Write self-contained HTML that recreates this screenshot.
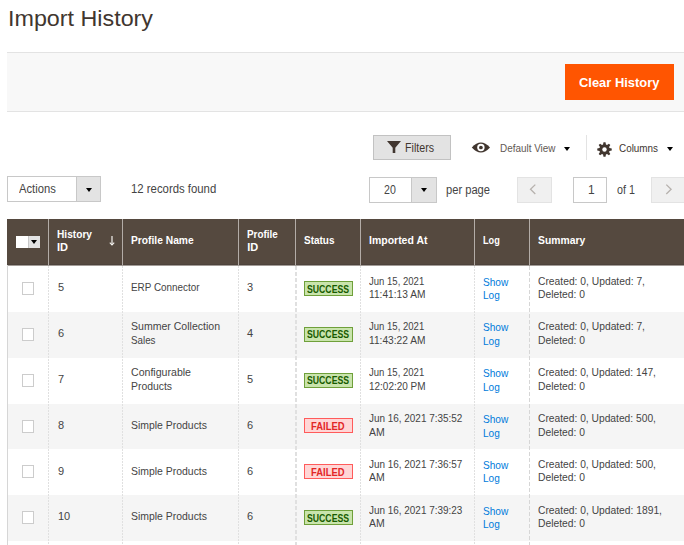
<!DOCTYPE html>
<html><head><meta charset="utf-8"><style>
*{margin:0;padding:0;box-sizing:border-box}
html,body{width:684px;height:545px;overflow:hidden;background:#fff}
body{font-family:"Liberation Sans",sans-serif;color:#303030;position:relative}
.a{position:absolute}
.t{position:absolute;white-space:nowrap;line-height:13px}
.tri{position:absolute;width:0;height:0;border-left:3.5px solid transparent;border-right:3.5px solid transparent;border-top:4px solid #000}
</style></head><body>
<div class="t" style="left:7.80px;top:12.00px;font-size:22.5px;transform:scaleX(1.0357);transform-origin:0 0;color:#41362f;font-weight:normal;">Import History</div>
<div class="a" style="left:7px;top:52px;width:677px;height:60px;background:#f8f8f8;border-top:1px solid #e3e3e3;border-bottom:1px solid #e3e3e3"></div>
<div class="a" style="left:565px;top:64px;width:109px;height:36px;background:#ff5501"></div>
<div class="t" style="left:579.00px;top:77.00px;font-size:12.5px;font-weight:bold;transform:scaleX(1.0337);transform-origin:0 0;color:#fff;">Clear History</div>
<div class="a" style="left:373px;top:135px;width:78px;height:25px;background:#e3e3e3;border:1px solid #c2c2c2"></div>
<svg class="a" style="left:387px;top:141px" width="14" height="12" viewBox="0 0 14 12"><path d="M0 0H14L8.3 6.8V12H5.7V6.8Z" fill="#41362f"/></svg>
<div class="t" style="left:404.50px;top:142.00px;font-size:12px;transform:scaleX(0.8889);transform-origin:0 0;color:#41362f;">Filters</div>
<svg class="a" style="left:471px;top:142px" width="20" height="11" viewBox="0 0 20 11"><path d="M0.8 5.5Q9.9 -4.4 19 5.5Q9.9 15.4 0.8 5.5Z" fill="#41362f"/><circle cx="9.9" cy="5.5" r="3.7" fill="#fff"/><circle cx="9.9" cy="5.5" r="1.85" fill="#41362f"/></svg>
<div class="t" style="left:500.30px;top:142.00px;font-size:11px;transform:scaleX(0.9006);transform-origin:0 0;color:#625954;">Default View</div>
<div class="tri" style="left:563.5px;top:147px;border-left-width:3.25px;border-right-width:3.25px"></div>
<div class="a" style="left:586px;top:135px;width:1px;height:25px;background:#e3e3e3"></div>
<svg class="a" style="left:597px;top:141.5px" width="15" height="15" viewBox="0 0 15 15"><path d="M6.07 2.50 L6.48 0.27 L8.52 0.27 L8.93 2.50 L10.02 2.95 L11.89 1.67 L13.33 3.11 L12.05 4.98 L12.50 6.07 L14.73 6.48 L14.73 8.52 L12.50 8.93 L12.05 10.02 L13.33 11.89 L11.89 13.33 L10.02 12.05 L8.93 12.50 L8.52 14.73 L6.48 14.73 L6.07 12.50 L4.98 12.05 L3.11 13.33 L1.67 11.89 L2.95 10.02 L2.50 8.93 L0.27 8.52 L0.27 6.48 L2.50 6.07 L2.95 4.98 L1.67 3.11 L3.11 1.67 L4.98 2.95Z" fill="#41362f"/><circle cx="7.5" cy="7.5" r="2.2" fill="#fff"/></svg>
<div class="t" style="left:619.30px;top:142.00px;font-size:11px;transform:scaleX(0.8991);transform-origin:0 0;color:#41362f;">Columns</div>
<div class="tri" style="left:666.5px;top:147px;border-left-width:3.25px;border-right-width:3.25px"></div>
<div class="a" style="left:7px;top:176px;width:94px;height:26px;background:#fff;border:1px solid #c8c8c8"></div>
<div class="a" style="left:76px;top:176px;width:25px;height:26px;background:#e3e3e3;border:1px solid #c8c8c8"></div>
<div class="tri" style="left:85.5px;top:187.5px;border-left-width:3.25px;border-right-width:3.25px"></div>
<div class="t" style="left:19.00px;top:183.20px;font-size:12px;transform:scaleX(0.9346);transform-origin:0 0;color:#444444;">Actions</div>
<div class="t" style="left:130.90px;top:183.20px;font-size:12px;transform:scaleX(0.9467);transform-origin:0 0;color:#444444;">12 records found</div>
<div class="a" style="left:369px;top:177px;width:68px;height:26px;background:#fff;border:1px solid #c8c8c8"></div>
<div class="a" style="left:411px;top:177px;width:26px;height:26px;background:#e3e3e3;border:1px solid #c8c8c8"></div>
<div class="tri" style="left:421px;top:188px;border-left-width:3.25px;border-right-width:3.25px"></div>
<div class="t" style="left:384.00px;top:184.20px;font-size:12px;transform:scaleX(0.8822);transform-origin:0 0;color:#444444;">20</div>
<div class="t" style="left:446.00px;top:184.00px;font-size:12px;transform:scaleX(0.9288);transform-origin:0 0;color:#444444;">per page</div>
<div class="a" style="left:517px;top:177px;width:35px;height:26px;background:#f0f0f0;border:1px solid #e3e3e3"></div>
<svg class="a" style="left:529px;top:184px" width="8" height="11" viewBox="0 0 8 11"><path d="M6.3 0.6L1.5 5.3L6.3 10" stroke="#b6b1ad" stroke-width="1.3" fill="none"/></svg>
<div class="a" style="left:573px;top:177px;width:34px;height:26px;background:#fff;border:1px solid #c8c8c8"></div>
<div class="t" style="left:588.00px;top:184.20px;font-size:12px;color:#444444;">1</div>
<div class="t" style="left:616.50px;top:184.20px;font-size:12px;transform:scaleX(0.8950);transform-origin:0 0;color:#444444;">of 1</div>
<div class="a" style="left:651px;top:177px;width:35px;height:26px;background:#f0f0f0;border:1px solid #e3e3e3"></div>
<svg class="a" style="left:665px;top:184px" width="8" height="11" viewBox="0 0 8 11"><path d="M1.3 0.6L6.1 5.3L1.3 10" stroke="#b6b1ad" stroke-width="1.3" fill="none"/></svg>
<div class="a" style="left:7px;top:219px;width:677px;height:46px;background:#55493f"></div>
<div class="a" style="left:7px;top:264px;width:677px;height:1px;background:#4d433c"></div>
<div class="a" style="left:7px;top:265px;width:677px;height:1px;background:#a39c97"></div>
<div class="a" style="left:48px;top:219px;width:1px;height:46px;background:#b3aca7"></div>
<div class="a" style="left:122px;top:219px;width:1px;height:46px;background:#b3aca7"></div>
<div class="a" style="left:238px;top:219px;width:1px;height:46px;background:#b3aca7"></div>
<div class="a" style="left:295px;top:219px;width:1px;height:46px;background:#b3aca7"></div>
<div class="a" style="left:360px;top:219px;width:1px;height:46px;background:#b3aca7"></div>
<div class="a" style="left:474px;top:219px;width:1px;height:46px;background:#b3aca7"></div>
<div class="a" style="left:529px;top:219px;width:1px;height:46px;background:#b3aca7"></div>
<div class="a" style="left:16px;top:236px;width:12px;height:12px;background:#fff"></div>
<div class="a" style="left:28px;top:236px;width:12px;height:12px;background:#e3e3e3;border-left:1px solid #c8c8c8"></div>
<div class="tri" style="left:31px;top:240px;border-left-width:3.25px;border-right-width:3.25px"></div>
<div class="t" style="left:57.00px;top:228.00px;font-size:11px;font-weight:bold;transform:scaleX(0.9241);transform-origin:0 0;color:#fff;">History</div>
<div class="t" style="left:57.00px;top:241.00px;font-size:11px;font-weight:bold;color:#fff;">ID</div>
<svg class="a" style="left:109px;top:235px" width="6" height="11" viewBox="0 0 6 11"><path d="M3 1V9.5" stroke="#f4f2ef" stroke-width="1.2"/><path d="M0.8 7.6L3 10L5.2 7.6" stroke="#f4f2ef" stroke-width="1.1" fill="none"/></svg>
<div class="t" style="left:130.60px;top:234.00px;font-size:11px;font-weight:bold;transform:scaleX(0.9323);transform-origin:0 0;color:#fff;">Profile Name</div>
<div class="t" style="left:247.20px;top:228.00px;font-size:11px;font-weight:bold;transform:scaleX(0.8993);transform-origin:0 0;color:#fff;">Profile</div>
<div class="t" style="left:247.20px;top:241.00px;font-size:11px;font-weight:bold;color:#fff;">ID</div>
<div class="t" style="left:303.90px;top:234.00px;font-size:11px;font-weight:bold;transform:scaleX(0.9071);transform-origin:0 0;color:#fff;">Status</div>
<div class="t" style="left:369.00px;top:234.00px;font-size:11px;font-weight:bold;transform:scaleX(0.9532);transform-origin:0 0;color:#fff;">Imported At</div>
<div class="t" style="left:482.90px;top:234.00px;font-size:11px;font-weight:bold;transform:scaleX(0.8298);transform-origin:0 0;color:#fff;">Log</div>
<div class="t" style="left:537.60px;top:234.00px;font-size:11px;font-weight:bold;transform:scaleX(0.9416);transform-origin:0 0;color:#fff;">Summary</div>
<div class="a" style="left:22px;top:282.10px;width:12px;height:13px;background:#fff;border:1px solid #cccccc"></div>
<div class="t" style="left:58.00px;top:281.40px;font-size:11px;color:#444444;">5</div>
<div class="t" style="left:130.80px;top:281.40px;font-size:11px;transform:scaleX(0.8984);transform-origin:0 0;color:#444444;">ERP Connector</div>
<div class="t" style="left:247.00px;top:281.40px;font-size:11px;color:#444444;">3</div>
<div class="a" style="left:304px;top:281.00px;width:49px;height:15px;background:#c9e4ac;border:1px solid #6fa03a"></div>
<div class="t" style="left:307.20px;top:282.50px;font-size:11px;transform:scaleX(0.7906);transform-origin:0 0;font-weight:bold;color:#185b00;">SUCCESS</div>
<div class="t" style="left:369.20px;top:274.60px;font-size:11px;transform:scaleX(0.8676);transform-origin:0 0;color:#444444;">Jun 15, 2021</div>
<div class="t" style="left:369.20px;top:288.20px;font-size:11px;transform:scaleX(0.9262);transform-origin:0 0;color:#444444;">11:41:13 AM</div>
<div class="t" style="left:482.80px;top:275.60px;font-size:11px;transform:scaleX(0.9195);transform-origin:0 0;color:#007bdb;">Show</div>
<div class="t" style="left:482.80px;top:289.20px;font-size:11px;transform:scaleX(0.9143);transform-origin:0 0;color:#007bdb;">Log</div>
<div class="t" style="left:538.00px;top:274.60px;font-size:11px;transform:scaleX(0.9355);transform-origin:0 0;color:#444444;">Created: 0, Updated: 7,</div>
<div class="t" style="left:538.00px;top:288.20px;font-size:11px;transform:scaleX(0.9377);transform-origin:0 0;color:#444444;">Deleted: 0</div>
<div class="a" style="left:8px;top:312.00px;width:676px;height:45.8px;background:#f5f5f5"></div>
<div class="a" style="left:22px;top:327.90px;width:12px;height:13px;background:#fff;border:1px solid #cccccc"></div>
<div class="t" style="left:58.00px;top:327.20px;font-size:11px;color:#444444;">6</div>
<div class="t" style="left:130.80px;top:320.40px;font-size:11px;transform:scaleX(0.9583);transform-origin:0 0;color:#444444;">Summer Collection</div>
<div class="t" style="left:130.80px;top:334.00px;font-size:11px;transform:scaleX(0.8909);transform-origin:0 0;color:#444444;">Sales</div>
<div class="t" style="left:247.00px;top:327.20px;font-size:11px;color:#444444;">4</div>
<div class="a" style="left:304px;top:326.80px;width:49px;height:15px;background:#c9e4ac;border:1px solid #6fa03a"></div>
<div class="t" style="left:307.20px;top:328.30px;font-size:11px;transform:scaleX(0.7906);transform-origin:0 0;font-weight:bold;color:#185b00;">SUCCESS</div>
<div class="t" style="left:369.20px;top:320.40px;font-size:11px;transform:scaleX(0.8676);transform-origin:0 0;color:#444444;">Jun 15, 2021</div>
<div class="t" style="left:369.20px;top:334.00px;font-size:11px;transform:scaleX(0.9262);transform-origin:0 0;color:#444444;">11:43:22 AM</div>
<div class="t" style="left:482.80px;top:321.40px;font-size:11px;transform:scaleX(0.9195);transform-origin:0 0;color:#007bdb;">Show</div>
<div class="t" style="left:482.80px;top:335.00px;font-size:11px;transform:scaleX(0.9143);transform-origin:0 0;color:#007bdb;">Log</div>
<div class="t" style="left:538.00px;top:320.40px;font-size:11px;transform:scaleX(0.9355);transform-origin:0 0;color:#444444;">Created: 0, Updated: 7,</div>
<div class="t" style="left:538.00px;top:334.00px;font-size:11px;transform:scaleX(0.9377);transform-origin:0 0;color:#444444;">Deleted: 0</div>
<div class="a" style="left:22px;top:373.70px;width:12px;height:13px;background:#fff;border:1px solid #cccccc"></div>
<div class="t" style="left:58.00px;top:373.00px;font-size:11px;color:#444444;">7</div>
<div class="t" style="left:130.80px;top:366.20px;font-size:11px;transform:scaleX(0.9619);transform-origin:0 0;color:#444444;">Configurable</div>
<div class="t" style="left:130.80px;top:379.80px;font-size:11px;transform:scaleX(0.9452);transform-origin:0 0;color:#444444;">Products</div>
<div class="t" style="left:247.00px;top:373.00px;font-size:11px;color:#444444;">5</div>
<div class="a" style="left:304px;top:372.60px;width:49px;height:15px;background:#c9e4ac;border:1px solid #6fa03a"></div>
<div class="t" style="left:307.20px;top:374.10px;font-size:11px;transform:scaleX(0.7906);transform-origin:0 0;font-weight:bold;color:#185b00;">SUCCESS</div>
<div class="t" style="left:369.20px;top:366.20px;font-size:11px;transform:scaleX(0.8676);transform-origin:0 0;color:#444444;">Jun 15, 2021</div>
<div class="t" style="left:369.20px;top:379.80px;font-size:11px;transform:scaleX(0.9058);transform-origin:0 0;color:#444444;">12:02:20 PM</div>
<div class="t" style="left:482.80px;top:367.20px;font-size:11px;transform:scaleX(0.9195);transform-origin:0 0;color:#007bdb;">Show</div>
<div class="t" style="left:482.80px;top:380.80px;font-size:11px;transform:scaleX(0.9143);transform-origin:0 0;color:#007bdb;">Log</div>
<div class="t" style="left:538.00px;top:366.20px;font-size:11px;transform:scaleX(0.9319);transform-origin:0 0;color:#444444;">Created: 0, Updated: 147,</div>
<div class="t" style="left:538.00px;top:379.80px;font-size:11px;transform:scaleX(0.9377);transform-origin:0 0;color:#444444;">Deleted: 0</div>
<div class="a" style="left:8px;top:403.60px;width:676px;height:45.8px;background:#f5f5f5"></div>
<div class="a" style="left:22px;top:419.50px;width:12px;height:13px;background:#fff;border:1px solid #cccccc"></div>
<div class="t" style="left:58.00px;top:418.80px;font-size:11px;color:#444444;">8</div>
<div class="t" style="left:130.80px;top:418.80px;font-size:11px;transform:scaleX(0.9485);transform-origin:0 0;color:#444444;">Simple Products</div>
<div class="t" style="left:247.00px;top:418.80px;font-size:11px;color:#444444;">6</div>
<div class="a" style="left:304px;top:418.40px;width:49px;height:15px;background:#ffd6d6;border:1px solid #ff5b5b"></div>
<div class="t" style="left:311.00px;top:419.90px;font-size:11px;transform:scaleX(0.8562);transform-origin:0 0;font-weight:bold;color:#e22626;">FAILED</div>
<div class="t" style="left:369.20px;top:412.00px;font-size:11px;transform:scaleX(0.9025);transform-origin:0 0;color:#444444;">Jun 16, 2021 7:35:52</div>
<div class="t" style="left:369.20px;top:425.60px;font-size:11px;transform:scaleX(0.9515);transform-origin:0 0;color:#444444;">AM</div>
<div class="t" style="left:482.80px;top:413.00px;font-size:11px;transform:scaleX(0.9195);transform-origin:0 0;color:#007bdb;">Show</div>
<div class="t" style="left:482.80px;top:426.60px;font-size:11px;transform:scaleX(0.9143);transform-origin:0 0;color:#007bdb;">Log</div>
<div class="t" style="left:538.00px;top:412.00px;font-size:11px;transform:scaleX(0.9319);transform-origin:0 0;color:#444444;">Created: 0, Updated: 500,</div>
<div class="t" style="left:538.00px;top:425.60px;font-size:11px;transform:scaleX(0.9377);transform-origin:0 0;color:#444444;">Deleted: 0</div>
<div class="a" style="left:22px;top:465.30px;width:12px;height:13px;background:#fff;border:1px solid #cccccc"></div>
<div class="t" style="left:58.00px;top:464.60px;font-size:11px;color:#444444;">9</div>
<div class="t" style="left:130.80px;top:464.60px;font-size:11px;transform:scaleX(0.9485);transform-origin:0 0;color:#444444;">Simple Products</div>
<div class="t" style="left:247.00px;top:464.60px;font-size:11px;color:#444444;">6</div>
<div class="a" style="left:304px;top:464.20px;width:49px;height:15px;background:#ffd6d6;border:1px solid #ff5b5b"></div>
<div class="t" style="left:311.00px;top:465.70px;font-size:11px;transform:scaleX(0.8562);transform-origin:0 0;font-weight:bold;color:#e22626;">FAILED</div>
<div class="t" style="left:369.20px;top:457.80px;font-size:11px;transform:scaleX(0.9025);transform-origin:0 0;color:#444444;">Jun 16, 2021 7:36:57</div>
<div class="t" style="left:369.20px;top:471.40px;font-size:11px;transform:scaleX(0.9515);transform-origin:0 0;color:#444444;">AM</div>
<div class="t" style="left:482.80px;top:458.80px;font-size:11px;transform:scaleX(0.9195);transform-origin:0 0;color:#007bdb;">Show</div>
<div class="t" style="left:482.80px;top:472.40px;font-size:11px;transform:scaleX(0.9143);transform-origin:0 0;color:#007bdb;">Log</div>
<div class="t" style="left:538.00px;top:457.80px;font-size:11px;transform:scaleX(0.9319);transform-origin:0 0;color:#444444;">Created: 0, Updated: 500,</div>
<div class="t" style="left:538.00px;top:471.40px;font-size:11px;transform:scaleX(0.9377);transform-origin:0 0;color:#444444;">Deleted: 0</div>
<div class="a" style="left:8px;top:495.20px;width:676px;height:45.8px;background:#f5f5f5"></div>
<div class="a" style="left:22px;top:511.10px;width:12px;height:13px;background:#fff;border:1px solid #cccccc"></div>
<div class="t" style="left:58.00px;top:510.40px;font-size:11px;color:#444444;">10</div>
<div class="t" style="left:130.80px;top:510.40px;font-size:11px;transform:scaleX(0.9485);transform-origin:0 0;color:#444444;">Simple Products</div>
<div class="t" style="left:247.00px;top:510.40px;font-size:11px;color:#444444;">6</div>
<div class="a" style="left:304px;top:510.00px;width:49px;height:15px;background:#c9e4ac;border:1px solid #6fa03a"></div>
<div class="t" style="left:307.20px;top:511.50px;font-size:11px;transform:scaleX(0.7906);transform-origin:0 0;font-weight:bold;color:#185b00;">SUCCESS</div>
<div class="t" style="left:369.20px;top:503.60px;font-size:11px;transform:scaleX(0.9025);transform-origin:0 0;color:#444444;">Jun 16, 2021 7:39:23</div>
<div class="t" style="left:369.20px;top:517.20px;font-size:11px;transform:scaleX(0.9515);transform-origin:0 0;color:#444444;">AM</div>
<div class="t" style="left:482.80px;top:504.60px;font-size:11px;transform:scaleX(0.9195);transform-origin:0 0;color:#007bdb;">Show</div>
<div class="t" style="left:482.80px;top:518.20px;font-size:11px;transform:scaleX(0.9143);transform-origin:0 0;color:#007bdb;">Log</div>
<div class="t" style="left:538.00px;top:503.60px;font-size:11px;transform:scaleX(0.9341);transform-origin:0 0;color:#444444;">Created: 0, Updated: 1891,</div>
<div class="t" style="left:538.00px;top:517.20px;font-size:11px;transform:scaleX(0.9377);transform-origin:0 0;color:#444444;">Deleted: 0</div>
<div class="a" style="left:22px;top:556.90px;width:12px;height:13px;background:#fff;border:1px solid #cccccc"></div>
<div class="t" style="left:58.00px;top:556.20px;font-size:11px;color:#444444;">11</div>
<div class="t" style="left:130.80px;top:556.20px;font-size:11px;transform:scaleX(0.9485);transform-origin:0 0;color:#444444;">Simple Products</div>
<div class="t" style="left:247.00px;top:556.20px;font-size:11px;color:#444444;">6</div>
<div class="a" style="left:304px;top:555.80px;width:49px;height:15px;background:#c9e4ac;border:1px solid #6fa03a"></div>
<div class="t" style="left:307.20px;top:557.30px;font-size:11px;transform:scaleX(0.7906);transform-origin:0 0;font-weight:bold;color:#185b00;">SUCCESS</div>
<div class="t" style="left:369.20px;top:549.40px;font-size:11px;transform:scaleX(0.9102);transform-origin:0 0;color:#444444;">Jun 16, 2021 7:40:11</div>
<div class="t" style="left:369.20px;top:563.00px;font-size:11px;transform:scaleX(0.9515);transform-origin:0 0;color:#444444;">AM</div>
<div class="t" style="left:482.80px;top:550.40px;font-size:11px;transform:scaleX(0.9195);transform-origin:0 0;color:#007bdb;">Show</div>
<div class="t" style="left:482.80px;top:564.00px;font-size:11px;transform:scaleX(0.9143);transform-origin:0 0;color:#007bdb;">Log</div>
<div class="t" style="left:538.00px;top:549.40px;font-size:11px;transform:scaleX(0.9341);transform-origin:0 0;color:#444444;">Created: 0, Updated: 1891,</div>
<div class="t" style="left:538.00px;top:563.00px;font-size:11px;transform:scaleX(0.9377);transform-origin:0 0;color:#444444;">Deleted: 0</div>
<div class="a" style="left:7px;top:265px;width:1px;height:280px;background:#d6d6d6"></div>
<div class="a" style="left:48px;top:266px;width:1px;height:279px;background:repeating-linear-gradient(to bottom,#e0e0e0 0,#e0e0e0 2px,transparent 2px,transparent 3px)"></div>
<div class="a" style="left:122px;top:266px;width:1px;height:279px;background:repeating-linear-gradient(to bottom,#e0e0e0 0,#e0e0e0 2px,transparent 2px,transparent 3px)"></div>
<div class="a" style="left:238px;top:266px;width:1px;height:279px;background:repeating-linear-gradient(to bottom,#e0e0e0 0,#e0e0e0 2px,transparent 2px,transparent 3px)"></div>
<div class="a" style="left:295px;top:266px;width:2px;height:279px;background:repeating-linear-gradient(to bottom,#e0e0e0 0,#e0e0e0 4px,transparent 4px,transparent 6px)"></div>
<div class="a" style="left:360px;top:266px;width:1px;height:279px;background:repeating-linear-gradient(to bottom,#e0e0e0 0,#e0e0e0 2px,transparent 2px,transparent 3px)"></div>
<div class="a" style="left:474px;top:266px;width:1px;height:279px;background:repeating-linear-gradient(to bottom,#e0e0e0 0,#e0e0e0 2px,transparent 2px,transparent 3px)"></div>
<div class="a" style="left:529px;top:266px;width:1px;height:279px;background:repeating-linear-gradient(to bottom,#d6d6d6 0,#d6d6d6 4px,transparent 4px,transparent 6px)"></div>
</body></html>
